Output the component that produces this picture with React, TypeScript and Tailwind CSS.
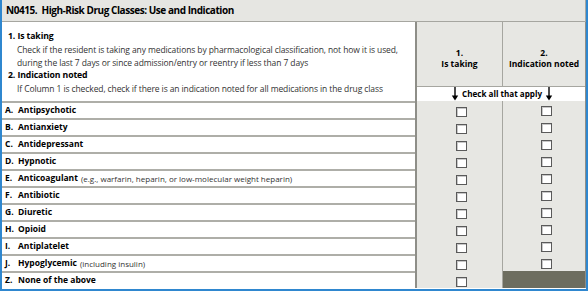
import React from "react";

const rows: { l: string; name: string; extra?: string }[] = [
  { l: "A.", name: "Antipsychotic" },
  { l: "B.", name: "Antianxiety" },
  { l: "C.", name: "Antidepressant" },
  { l: "D.", name: "Hypnotic" },
  { l: "E.", name: "Anticoagulant", extra: "(e.g., warfarin, heparin, or low-molecular weight heparin)" },
  { l: "F.", name: "Antibiotic" },
  { l: "G.", name: "Diuretic" },
  { l: "H.", name: "Opioid" },
  { l: "I.", name: "Antiplatelet" },
  { l: "J.", name: "Hypoglycemic", extra: "(including insulin)" },
  { l: "Z.", name: "None of the above" },
];

function Box() {
  return <div className="w-[11px] h-[10px] bg-white border border-[#5a5a5a] shadow-[inset_1px_1px_0_#c8c8c8] ml-1" />;
}

function Arrow() {
  return (
    <svg width="8" height="14" viewBox="0 0 8 14" className="shrink-0">
      <line x1="4" y1="0" x2="4" y2="12" stroke="#000" strokeWidth="1.4" />
      <path d="M0.8 8.5 L4 13.5 L7.2 8.5 Z" fill="#000" />
    </svg>
  );
}

export default function App() {
  return (
    <div
      className="w-[588px] h-[291px] bg-white border-l-2 border-r-2 border-b-2 border-[#2f87cf] text-black overflow-hidden"
      style={{ fontFamily: "'Open Sans', sans-serif" }}
    >
      <div className="h-[22px] bg-[#e6e6e2] border-b border-r border-[#a6a6a0] flex items-center pl-[4px]">
        <span className="font-bold text-[10px] tracking-[-0.45px]">N0415.&nbsp;&nbsp;High-Risk Drug Classes: Use and Indication</span>
      </div>
      <div className="flex h-[79px]">
        <div className="w-[413px] pl-[6px] pt-[8px] text-[8.5px] tracking-[-0.1px] leading-[13px] text-[#333]">
          <div className="font-bold text-black text-[8.7px]">1. Is taking</div>
          <div className="pl-[9px]">Check if the resident is taking any medications by pharmacological classification, not how it is used,</div>
          <div className="pl-[9px]">during the last 7 days or since admission/entry or reentry if less than 7 days</div>
          <div className="font-bold text-black text-[8.7px]">2. Indication noted</div>
          <div className="pl-[9px]">If Column 1 is checked, check if there is an indication noted for all medications in the drug class</div>
        </div>
        <div className="w-[171px] flex flex-col border-l-2 border-r border-[#8e8e88]">
          <div className="flex h-[65px] border-b border-[#a6a6a0]">
            <div className="w-[85px] bg-[#e7e7e3] flex flex-col items-center pt-[25px] text-[8.5px] font-bold leading-[11px]">
              <div>1.</div>
              <div>Is taking</div>
            </div>
            <div className="flex-1 bg-[#e7e7e3] border-l border-[#a6a6a0] flex flex-col items-center pt-[25px] text-[8.5px] font-bold leading-[11px]">
              <div>2.</div>
              <div>Indication noted</div>
            </div>
          </div>
          <div className="flex-1 bg-white flex items-center justify-center gap-[3px] text-[8.1px] font-bold pl-[2px]">
            <Arrow />
            <span>Check all that apply</span>
            <Arrow />
          </div>
        </div>
      </div>
      {rows.map((r, i) => (
        <div key={r.l} className="flex h-[17px] border-t-2 border-[#aeaea8]">
          <div className="w-[413px] flex items-center pl-[3px] text-[8.5px] leading-none">
            <span className="font-bold w-[13px]">{r.l}</span>
            <span className="font-bold">{r.name}</span>
            {r.extra && <span className="text-[#333] ml-[3px] text-[8px]">{r.extra}</span>}
          </div>
          <div className="w-[171px] flex border-l-2 border-r border-[#8e8e88] -mt-[2px]">
            <div className="w-[85px] bg-[#e7e7e3] flex items-center justify-center pt-[2px] border-t-2 border-[#e7e7e3]">
              <Box />
            </div>
            {i === rows.length - 1 ? (
              <div className="flex-1 bg-[#6d6d5f] border-l border-[#a6a6a0]" />
            ) : (
              <div className="flex-1 bg-[#e7e7e3] border-l border-[#a6a6a0] flex items-center justify-center pt-[2px]">
                <Box />
              </div>
            )}
          </div>
        </div>
      ))}
    </div>
  );
}
